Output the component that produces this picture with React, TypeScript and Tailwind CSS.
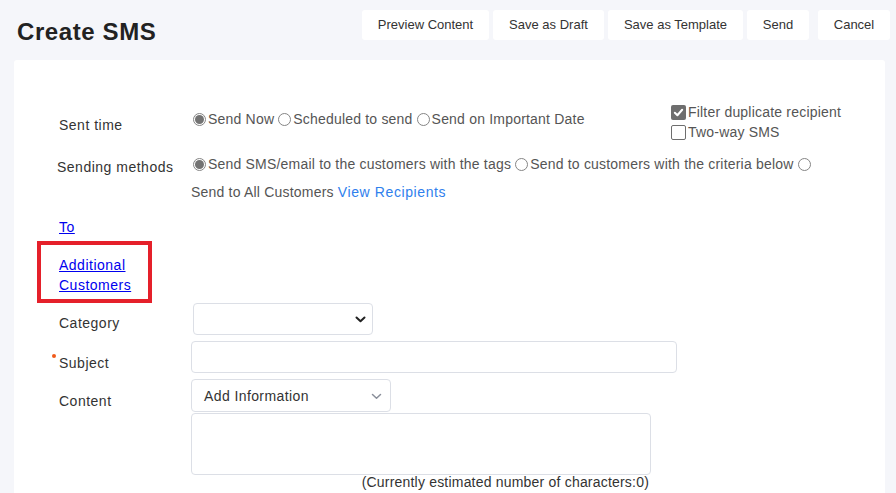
import React from 'react';

const font = { fontFamily: '"Liberation Sans", Arial, sans-serif' };

function Radio({ checked, label }: { checked?: boolean; label?: string }) {
  return (
    <span className="inline-flex items-center">
      <span className="flex h-[13px] w-[13px] items-center justify-center rounded-full border border-[#858585] bg-white">
        {checked && <span className="h-[9px] w-[9px] rounded-full bg-[#737373]" />}
      </span>
      {label && <span className="ml-[2px]">{label}</span>}
    </span>
  );
}

function Checkbox({ checked, label }: { checked?: boolean; label: string }) {
  return (
    <div className="flex h-[20px] items-center">
      {checked ? (
        <span className="flex h-[15px] w-[15px] items-center justify-center rounded-[2px] bg-[#6e6e6e]">
          <svg width="11" height="11" viewBox="0 0 12 12">
            <path d="M2 6.3 L4.8 9 L10 3" fill="none" stroke="white" strokeWidth="2.2" strokeLinecap="round" strokeLinejoin="round" />
          </svg>
        </span>
      ) : (
        <span className="h-[15px] w-[15px] rounded-[2px] border border-[#6e6e6e] bg-white" />
      )}
      <span className="ml-[2px]">{label}</span>
    </div>
  );
}

function Chevron({ color, bold }: { color: string; bold?: boolean }) {
  return (
    <svg width="11" height="7" viewBox="0 0 11 7">
      <path d="M1.5 1.5 L5.5 5.3 L9.5 1.5" fill="none" stroke={color} strokeWidth={bold ? 2 : 1.5} strokeLinecap="round" strokeLinejoin="round" />
    </svg>
  );
}

export default function App() {
  const buttons = [
    { label: 'Preview Content', w: 'w-[127px]' },
    { label: 'Save as Draft', w: 'w-[111px]' },
    { label: 'Save as Template', w: 'w-[135px]' },
    { label: 'Send', w: 'w-[62px]' },
  ];

  return (
    <div className="min-h-[493px] w-[896px] overflow-hidden bg-[#f5f6fa]" style={font}>
      <div className="flex h-[60px]">
        <h1 className="ml-[17px] mt-[17px] text-[24px] font-bold leading-[30px] tracking-[0.6px] text-[#222]">Create SMS</h1>
        <div className="ml-auto mr-[6px] mt-[10px] flex">
          {buttons.map((b) => (
            <button key={b.label} className={`mr-[4px] h-[30px] rounded-[3px] bg-white text-[13px] text-[#333] ${b.w}`}>
              {b.label}
            </button>
          ))}
          <button className="ml-[5px] h-[30px] w-[72px] rounded-[3px] bg-white text-[13px] text-[#333]">Cancel</button>
        </div>
      </div>

      <div className="ml-[14px] h-[433px] w-[871px] rounded-t-[3px] bg-white pt-[40px] text-[14px] tracking-[0.5px]">
        {/* Sent time */}
        <div className="flex h-[50px]">
          <div className="ml-[45px] mt-[15px] w-[134px] leading-[20px] text-[#333]">Sent time</div>
          <div className="mt-[9px] flex h-[20px] w-[478px] items-center gap-[4px] leading-[20px] tracking-[0.2px] text-[#555]">
            <Radio checked label="Send Now" />
            <Radio label="Scheduled to send" />
            <Radio label="Send on Important Date" />
          </div>
          <div className="mt-[2px] leading-[20px] tracking-[0.2px] text-[#555]">
            <Checkbox checked label="Filter duplicate recipient" />
            <Checkbox label="Two-way SMS" />
          </div>
        </div>

        {/* Sending methods */}
        <div className="flex h-[67px]">
          <div className="ml-[43px] mt-[7px] w-[136px] leading-[20px] text-[#333]">Sending methods</div>
          <div className="tracking-[0.2px] text-[#555]">
            <div className="mt-[4px] flex h-[20px] items-center gap-[4px] leading-[20px]">
              <Radio checked label="Send SMS/email to the customers with the tags" />
              <Radio label="Send to customers with the criteria below" />
              <Radio />
            </div>
            <div className="-ml-[2px] mt-[8px] leading-[20px]">
              Send to All Customers <span className="tracking-[0.6px] text-[#2f80ed]">View Recipients</span>
            </div>
          </div>
        </div>

        {/* To */}
        <div className="ml-[45px] leading-[20px]">
          <a className="text-[#0000ee] underline">To</a>
        </div>

        {/* Additional Customers */}
        <div className="ml-[23px] mt-[4px] h-[62px] w-[115px] border-[4px] border-[#e5202a] pl-[18px] pt-[10px] leading-[20px]">
          <a className="text-[#0000ee] underline">Additional</a>
          <br />
          <a className="text-[#0000ee] underline">Customers</a>
        </div>

        {/* Category */}
        <div className="flex h-[38px]">
          <div className="ml-[45px] mt-[10px] w-[134px] leading-[20px] text-[#333]">Category</div>
          <div className="flex h-[32px] w-[180px] items-center justify-end rounded-[4px] border border-[#dcdfe6] pr-[6px]">
            <Chevron color="#222" bold />
          </div>
        </div>

        {/* Subject */}
        <div className="flex h-[38px]">
          <div className="relative ml-[45px] mt-[12px] w-[132px] leading-[20px] text-[#333]">
            <span className="absolute -left-[7px] top-[1px] h-[4px] w-[4px] rounded-full bg-[#f05a1a]" />
            Subject
          </div>
          <div className="h-[32px] w-[486px] rounded-[4px] border border-[#dcdfe6]" />
        </div>

        {/* Content */}
        <div className="flex">
          <div className="ml-[45px] mt-[12px] w-[132px] leading-[20px] text-[#333]">Content</div>
          <div>
            <div className="flex h-[33px] w-[200px] items-center justify-between rounded-[4px] border border-[#dcdfe6] pl-[12px] pr-[8px] pt-[2px] text-[#333]">
              <span className="tracking-[0.4px]">Add Information</span>
              <Chevron color="#8a8f9a" />
            </div>
            <div className="mt-[1px] h-[62px] w-[460px] rounded-[4px] border border-[#dcdfe6]" />
            <div className="w-[458px] text-right leading-[14px] tracking-[0.2px] text-[#333]">(Currently estimated number of characters:0)</div>
          </div>
        </div>
      </div>
    </div>
  );
}
